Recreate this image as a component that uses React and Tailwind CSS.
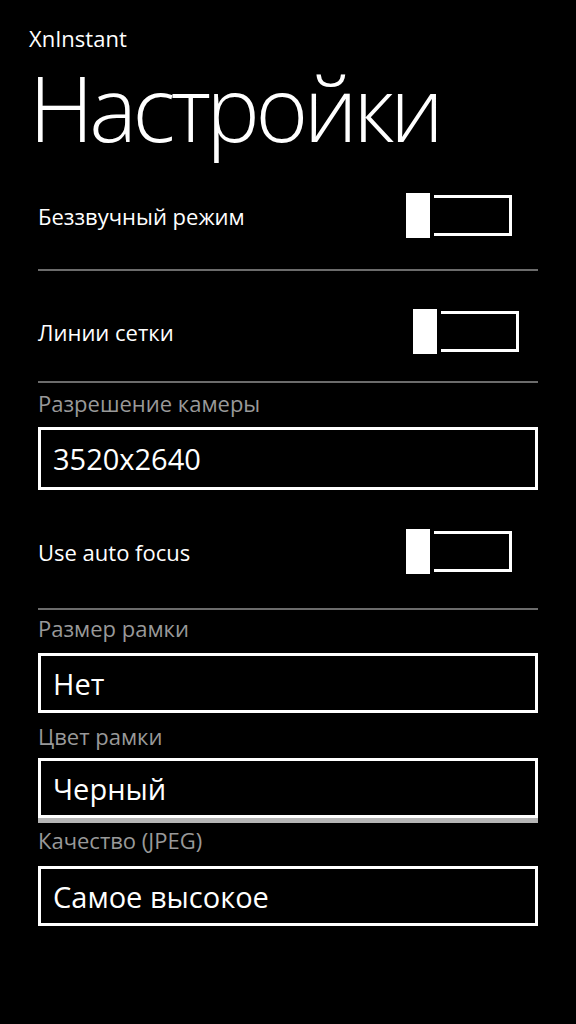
import React from 'react';

const Toggle = ({ shift = false }) => (
  <div className={`flex items-center gap-[4px] ${shift ? 'mr-[19px]' : 'mr-[26px]'}`}>
    <div className="w-[24px] h-[45px] bg-white" />
    <div className="w-[78px] h-[41px] border-[3px] border-l-0 border-white" />
  </div>
);

const ToggleRow = ({ label, shift, pt, pb }) => (
  <div className={`flex items-center justify-between ${pt} ${pb}`}>
    <span className="text-[22px] leading-[28px] text-white">{label}</span>
    <Toggle shift={shift} />
  </div>
);

const Separator = () => <div className="h-[2px] bg-[#6b6b6b]" />;

const FieldLabel = ({ children, mt }) => (
  <div className={`text-[22px] leading-[28px] text-[#999999] ${mt}`}>{children}</div>
);

const Picker = ({ value, h, mt, extra = '' }) => (
  <div className={`flex items-center border-[3px] border-white px-[12px] ${h} ${mt} ${extra}`}>
    <span className="text-[29px] leading-none text-white">{value}</span>
  </div>
);

export default function App() {
  return (
    <div className="w-[576px] h-[1024px] bg-black text-white overflow-hidden font-['Open_Sans',sans-serif]">
      <div className="pl-[29px] pt-[26px]">
        <div className="text-[22px] leading-[24px]">XnInstant</div>
        <div className="mt-[2px] text-[90px] leading-[110px] font-light tracking-[-0.05em]">Настройки</div>
      </div>

      <div className="ml-[38px] w-[500px]">
        <ToggleRow label="Беззвучный режим" pt="pt-[31px]" pb="pb-[31px]" />
        <Separator />
        <ToggleRow label="Линии сетки" shift pt="pt-[38px]" pb="pb-[27px]" />
        <Separator />

        <FieldLabel mt="mt-[6px]">Разрешение камеры</FieldLabel>
        <Picker value="3520x2640" h="h-[63px]" mt="mt-[10px]" />

        <ToggleRow label="Use auto focus" pt="pt-[39px]" pb="pb-[34px]" />
        <Separator />

        <FieldLabel mt="mt-[4px]">Размер рамки</FieldLabel>
        <Picker value="Нет" h="h-[60px]" mt="mt-[11px]" />

        <FieldLabel mt="mt-[9px]">Цвет рамки</FieldLabel>
        <Picker value="Черный" h="h-[60px]" mt="mt-[8px]" extra="shadow-[0_5px_0_#b5b5b5]" />

        <FieldLabel mt="mt-[8px]">Качество (JPEG)</FieldLabel>
        <Picker value="Самое высокое" h="h-[60px]" mt="mt-[12px]" />
      </div>
    </div>
  );
}
